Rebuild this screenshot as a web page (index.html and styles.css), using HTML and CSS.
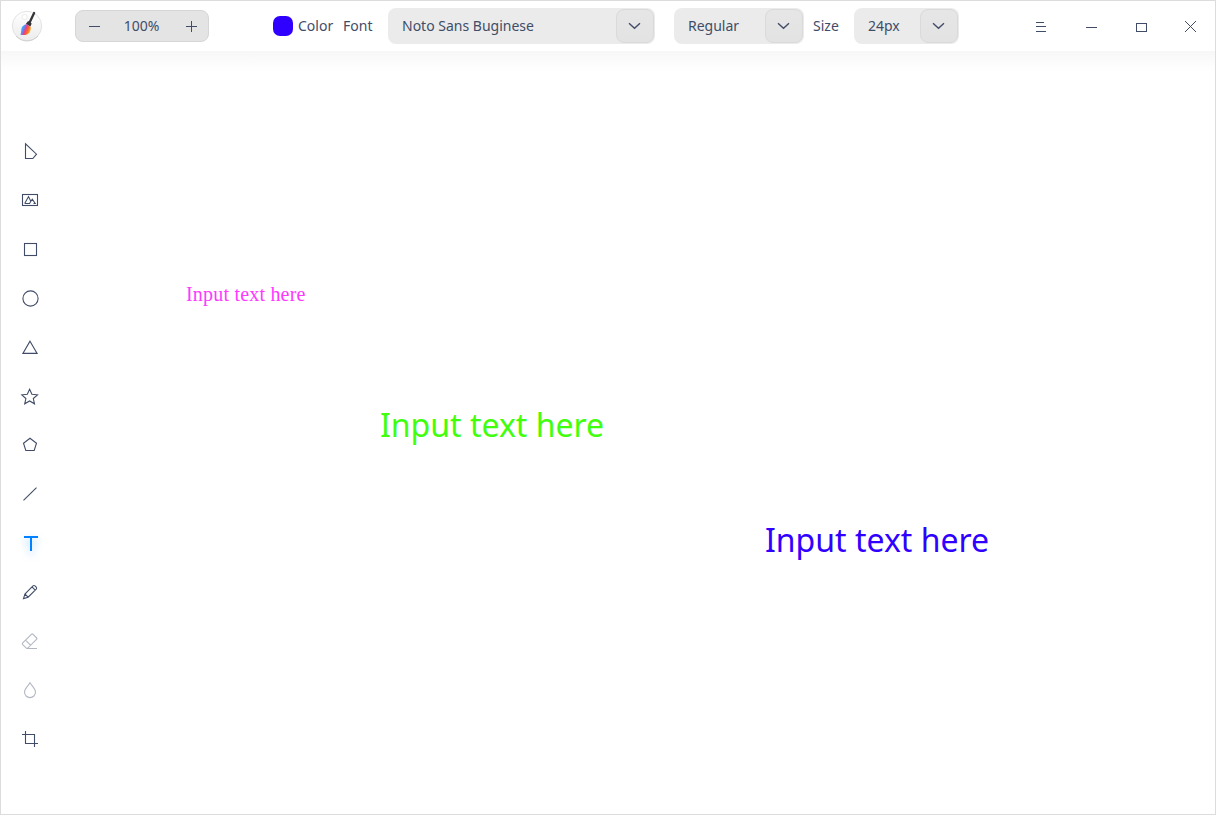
FILE: index.html
```html
<!DOCTYPE html>
<html lang="en">
<head>
<meta charset="utf-8">
<title>Draw</title>
<link rel="stylesheet" href="styles.css">
</head>
<body>
<div class="window">
  <header class="titlebar">
    <svg class="logo" width="32" height="32" viewBox="0 0 32 32">
      <defs>
        <linearGradient id="disc" x1="0" y1="0" x2="0" y2="1"><stop offset="0" stop-color="#fff"/><stop offset="1" stop-color="#ececec"/></linearGradient>
        <linearGradient id="bristle" gradientUnits="userSpaceOnUse" x1="10" y1="17" x2="20" y2="21"><stop offset="0" stop-color="#22c3ff"/><stop offset=".28" stop-color="#5a8cf5"/><stop offset=".45" stop-color="#e0409a"/><stop offset=".65" stop-color="#ff5a2c"/><stop offset="1" stop-color="#ffc21c"/></linearGradient>
      </defs>
      <circle cx="16" cy="16" r="14.7" fill="url(#disc)" stroke="#dcdcdc" stroke-width=".8"/>
      <path d="M5 26 A14.700 14.700 0 0 0 27 26" fill="none" stroke="#c9c9c9" stroke-width=".8"/>
      <circle cx="13.600" cy="7" r="2.600" fill="#fff" stroke="#e2e2e2" stroke-width=".7"/>
      <path d="M9.200 24.600c1.800-1.600.2-5.600 2.200-8 1.200-1.400 2.600-2.300 3.900-2.700l4.400 3c.3 3-.6 5.900-3.300 7.300-2.300 1.200-4.800 1.100-7.200.4z" fill="url(#bristle)"/>
      <path d="M14.900 13.700l2.200-2.600 3.600 2.300-1.300 3.200z" fill="#35353a"/>
      <path d="M18.600 12.400L23.100 3" stroke="#333338" stroke-width="2.300" stroke-linecap="round"/>
    </svg>
    <div class="zoom">
      <svg width="12" height="12"><path d="M0 6.500H11"/></svg>
      <span>100%</span>
      <svg width="12" height="12"><path d="M0 6.500H11M5.500 1V12"/></svg>
    </div>
    <div class="swatch"></div>
    <span class="label">Color</span>
    <span class="label font-label">Font</span>
    <div class="combo family"><span>Noto Sans Buginese</span><div class="drop"><svg width="14" height="8"><path d="M1 1.200L6.500 6.200L12 1.200"/></svg></div></div>
    <div class="combo weight"><span>Regular</span><div class="drop"><svg width="14" height="8"><path d="M1 1.200L6.500 6.200L12 1.200"/></svg></div></div>
    <span class="label size-label">Size</span>
    <div class="combo size"><span>24px</span><div class="drop"><svg width="14" height="8"><path d="M1 1.200L6.500 6.200L12 1.200"/></svg></div></div>
    <div class="controls">
      <svg width="50" height="50"><path d="M21 21.500H29M21 25.500H31M21 30.500H31"/></svg>
      <svg width="50" height="50"><path d="M21 26.500H32"/></svg>
      <svg width="50" height="50"><rect x="21.500" y="22.500" width="10" height="8"/></svg>
      <svg width="50" height="50"><path d="M20 20L31 31M31 20L20 31"/></svg>
    </div>
  </header>
  <main class="workspace">
    <nav class="tools">
      <svg class="tool"><path d="M15.500 16.800V31.500H22.800L26.500 27.200Z"/></svg>
      <svg class="tool"><rect x="12.500" y="18.500" width="15" height="11"/><path d="M14.700 27.500L18.500 20.600L20.800 25.300L22.300 23.300L25.200 27.500H23.500M14.700 27.500H19.600L20.800 25.300"/></svg>
      <svg class="tool"><rect x="14.500" y="18.500" width="12" height="12"/></svg>
      <svg class="tool"><circle cx="20.500" cy="24.500" r="7.600"/></svg>
      <svg class="tool"><path d="M20 18.200L27.100 30.400H12.900Z"/></svg>
      <svg class="tool"><path d="M19.600 17.200L21.900 22.200L27.500 22.800L23.300 26.500L24.500 31.800L19.600 29L14.700 31.800L15.900 26.500L11.800 22.800L17.300 22.200Z"/></svg>
      <svg class="tool"><path d="M20 17.300L26.500 22.200L24.200 29.500H15.800L13.500 22.200Z"/></svg>
      <svg class="tool"><path d="M13.500 30.300L26.500 17.600"/></svg>
      <svg class="tool active"><path d="M14 18H28M21 18V32"/></svg>
      <svg class="tool"><path d="M13.500 30.600L14.900 26L23 17.900Q24 17 25 17.900L26.200 19.100Q27.100 20.100 26.200 21.100L18.100 29.200ZM22 18.900L25.200 22.100M14.900 26L18.100 29.200"/></svg>
      <svg class="tool muted"><path d="M12.500 26.200L21.600 17.100Q22.200 16.500 22.800 17.100L26.700 21Q27.300 21.600 26.700 22.200L17.600 31.300H16.500L12.500 27.300Q12 26.700 12.500 26.200ZM15.500 23.200L20.700 28.400M16.500 31.500H27"/></svg>
      <svg class="tool muted"><path d="M20 16.800C18.500 19.300 14.500 22.600 14.500 26.100A5.500 5.500 0 0 0 25.500 26.100C25.500 22.600 21.500 19.300 20 16.800Z"/></svg>
      <svg class="tool"><path d="M12 19.500H24.500V32M15.500 16V28.500H28"/></svg>
    </nav>
    <div class="canvas">
      <div class="note note-pink">Input text here</div>
      <div class="note note-green">Input text here</div>
      <div class="note note-blue">Input text here</div>
    </div>
  </main>
</div>
</body>
</html>
```
FILE: styles.css
```css
* { box-sizing: border-box; }
body { margin: 0; background: #fff; font-family: "Noto Sans", sans-serif; font-size: 14px; color: #414d68; }
.window { width: 1216px; height: 815px; border: 1px solid #dcdcdc; display: flex; flex-direction: column; overflow: hidden; }
.titlebar { height: 50px; flex: none; display: flex; align-items: center; white-space: nowrap; line-height: 20px; }
svg { display: block; fill: none; stroke: #414d68; stroke-width: 1; }
.logo { margin-left: 10px; flex: none; stroke: none; }
.zoom { width: 134px; height: 32px; flex: none; margin-left: 32px; padding: 0 10px 0 13px; border: 1px solid #d6d6d6; border-radius: 8px; background: #e4e4e4; display: flex; align-items: center; justify-content: space-between; }
.zoom span { position: relative; left: -2px; }
.swatch { width: 20px; height: 20px; flex: none; margin-left: 64px; border-radius: 7px; background: #2f00ff; }
.label { margin-left: 5px; width: 35px; }
.font-label { margin-left: 10px; width: 30px; }
.combo { height: 36px; flex: none; border-radius: 8px; background: #ebebeb; display: flex; align-items: center; justify-content: space-between; padding-left: 14px; }
.family { width: 267px; margin-left: 15px; }
.weight { width: 130px; margin-left: 19px; }
.size-label { margin-left: 9px; width: 27px; }
.size { width: 105px; margin-left: 14px; }
.drop { width: 38px; height: 34px; margin-right: 1px; border: 1px solid #dadada; border-radius: 8px; background: linear-gradient(#e6e6e6, #e3e3e3); display: flex; align-items: center; justify-content: center; }
.drop svg { stroke-width: 1.4; }
.controls { display: flex; margin-left: auto; }
.workspace { flex: 1; display: flex; background: linear-gradient(#f7f7f7, #fff 20px); }
.tools { width: 58px; padding: 76px 0 0 9px; flex: none; }
.tool { width: 40px; height: 49px; stroke-width: 1.1; }
.active { stroke: #0081ff; stroke-width: 2; filter: drop-shadow(0 4px 4px rgba(0, 129, 255, .4)); }
.muted { stroke: #b2b7c2; }
.canvas { position: relative; flex: 1; }
.note { position: absolute; white-space: nowrap; font-size: 32px; line-height: 44px; }
.note-pink { left: 127px; top: 221px; font-family: "Liberation Serif", serif; font-size: 20px; letter-spacing: .2px; color: #ff38ff; }
.note-green { left: 321px; top: 352px; color: #40ff0d; }
.note-blue { left: 706px; top: 467px; color: #2f00ff; }
```
